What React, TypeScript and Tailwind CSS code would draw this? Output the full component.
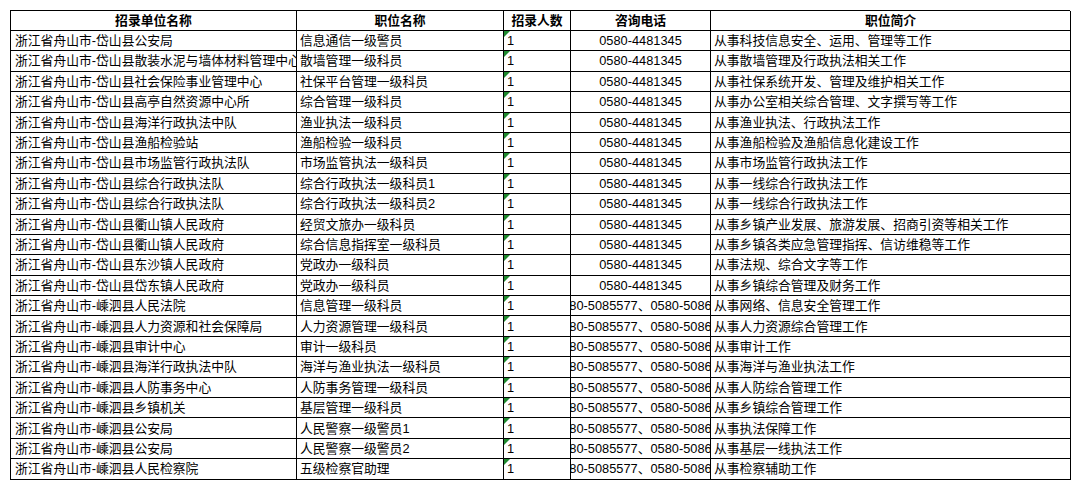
import React from "react";

interface Row {
  unit: string;
  post: string;
  count: string;
  phone: string;
  intro: string;
}

const DS = "0580-4481345";
const SS = "0580-5085577、0580-508633";

const rows: Row[] = [
  { unit: "浙江省舟山市-岱山县公安局", post: "信息通信一级警员", count: "1", phone: DS, intro: "从事科技信息安全、运用、管理等工作" },
  { unit: "浙江省舟山市-岱山县散装水泥与墙体材料管理中心", post: "散墙管理一级科员", count: "1", phone: DS, intro: "从事散墙管理及行政执法相关工作" },
  { unit: "浙江省舟山市-岱山县社会保险事业管理中心", post: "社保平台管理一级科员", count: "1", phone: DS, intro: "从事社保系统开发、管理及维护相关工作" },
  { unit: "浙江省舟山市-岱山县高亭自然资源中心所", post: "综合管理一级科员", count: "1", phone: DS, intro: "从事办公室相关综合管理、文字撰写等工作" },
  { unit: "浙江省舟山市-岱山县海洋行政执法中队", post: "渔业执法一级科员", count: "1", phone: DS, intro: "从事渔业执法、行政执法工作" },
  { unit: "浙江省舟山市-岱山县渔船检验站", post: "渔船检验一级科员", count: "1", phone: DS, intro: "从事渔船检验及渔船信息化建设工作" },
  { unit: "浙江省舟山市-岱山县市场监管行政执法队", post: "市场监管执法一级科员", count: "1", phone: DS, intro: "从事市场监管行政执法工作" },
  { unit: "浙江省舟山市-岱山县综合行政执法队", post: "综合行政执法一级科员1", count: "1", phone: DS, intro: "从事一线综合行政执法工作" },
  { unit: "浙江省舟山市-岱山县综合行政执法队", post: "综合行政执法一级科员2", count: "1", phone: DS, intro: "从事一线综合行政执法工作" },
  { unit: "浙江省舟山市-岱山县衢山镇人民政府", post: "经贸文旅办一级科员", count: "1", phone: DS, intro: "从事乡镇产业发展、旅游发展、招商引资等相关工作" },
  { unit: "浙江省舟山市-岱山县衢山镇人民政府", post: "综合信息指挥室一级科员", count: "1", phone: DS, intro: "从事乡镇各类应急管理指挥、信访维稳等工作" },
  { unit: "浙江省舟山市-岱山县东沙镇人民政府", post: "党政办一级科员", count: "1", phone: DS, intro: "从事法规、综合文字等工作" },
  { unit: "浙江省舟山市-岱山县岱东镇人民政府", post: "党政办一级科员", count: "1", phone: DS, intro: "从事乡镇综合管理及财务工作" },
  { unit: "浙江省舟山市-嵊泗县人民法院", post: "信息管理一级科员", count: "1", phone: SS, intro: "从事网络、信息安全管理工作" },
  { unit: "浙江省舟山市-嵊泗县人力资源和社会保障局", post: "人力资源管理一级科员", count: "1", phone: SS, intro: "从事人力资源综合管理工作" },
  { unit: "浙江省舟山市-嵊泗县审计中心", post: "审计一级科员", count: "1", phone: SS, intro: "从事审计工作" },
  { unit: "浙江省舟山市-嵊泗县海洋行政执法中队", post: "海洋与渔业执法一级科员", count: "1", phone: SS, intro: "从事海洋与渔业执法工作" },
  { unit: "浙江省舟山市-嵊泗县人防事务中心", post: "人防事务管理一级科员", count: "1", phone: SS, intro: "从事人防综合管理工作" },
  { unit: "浙江省舟山市-嵊泗县乡镇机关", post: "基层管理一级科员", count: "1", phone: SS, intro: "从事乡镇综合管理工作" },
  { unit: "浙江省舟山市-嵊泗县公安局", post: "人民警察一级警员1", count: "1", phone: SS, intro: "从事执法保障工作" },
  { unit: "浙江省舟山市-嵊泗县公安局", post: "人民警察一级警员2", count: "1", phone: SS, intro: "从事基层一线执法工作" },
  { unit: "浙江省舟山市-嵊泗县人民检察院", post: "五级检察官助理", count: "1", phone: SS, intro: "从事检察辅助工作" },
];

const cell = "border-r border-b border-black overflow-hidden whitespace-nowrap flex items-center";

const App: React.FC = () => {
  return (
    <div
      className="w-[1080px] h-[490px] bg-white pt-[10px] pl-[10px] text-black text-[12.8px]"
      style={{ fontFamily: '"Liberation Sans", "Noto Sans CJK SC", sans-serif' }}
    >
      <div className="grid grid-cols-[286px_207px_67px_140px_360px] w-[1060px] border-l border-t border-black">
        {["招录单位名称", "职位名称", "招录人数", "咨询电话", "职位简介"].map((h) => (
          <div key={h} className={`${cell} h-[20px] justify-center font-bold`}>
            {h}
          </div>
        ))}
        {rows.map((r, i) => (
          <React.Fragment key={i}>
            <div className={`${cell} h-[20.4px] pl-[4px]`}>{r.unit}</div>
            <div className={`${cell} h-[20.4px] pl-[3px]`}>{r.post}</div>
            <div className={`${cell} h-[20.4px] pl-[3px] relative`}>
              {/* excel "number stored as text" marker */}
              <span className="absolute left-0 top-0 w-0 h-0 border-t-[6px] border-r-[6px] border-t-[#1f8a2e] border-r-transparent" />
              {r.count}
            </div>
            <div className={`${cell} h-[20.4px] justify-center`}>
              <span className="shrink-0">{r.phone}</span>
            </div>
            <div className={`${cell} h-[20.4px] pl-[3px]`}>{r.intro}</div>
          </React.Fragment>
        ))}
      </div>
    </div>
  );
};

export default App;
